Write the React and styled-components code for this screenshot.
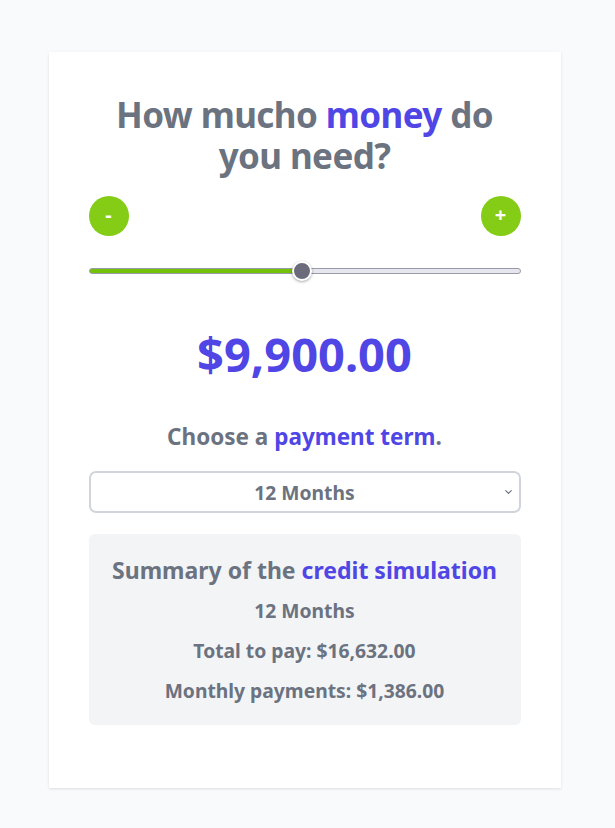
import React, { useState } from "react";
import styled, { createGlobalStyle } from "styled-components";
import { ChevronDown } from "lucide-react";

const GlobalStyle = createGlobalStyle`
  html, body { margin: 0; padding: 0; background: #f9fafb; }
  body { font-family: "Noto Sans", "Open Sans", sans-serif; }
  * { box-sizing: border-box; }
`;

const Page = styled.main`
  display: flex;
  justify-content: center;
  padding: 52px 6px 40px 0;
  min-height: 828px;
`;

const Card = styled.section`
  width: 512px;
  background: #ffffff;
  padding: 40px 40px 61px;
  box-shadow: 0 1px 3px rgba(0, 0, 0, 0.08), 0 1px 2px rgba(0, 0, 0, 0.04);
  display: flex;
  flex-direction: column;
`;

const Title = styled.h1`
  margin: 2px 0 0;
  font-size: 35px;
  line-height: 41px;
  font-weight: 700;
  letter-spacing: -0.6px;
  color: #6b7280;
  text-align: center;
  padding: 0 10px;
`;

const Accent = styled.span`
  color: #4f46e5;
`;

const Controls = styled.div`
  display: flex;
  justify-content: space-between;
  margin-top: 20px;
`;

const RoundButton = styled.button`
  width: 40px;
  height: 40px;
  border-radius: 50%;
  border: none;
  background: #84cc16;
  color: #ffffff;
  font-family: inherit;
  font-size: 20px;
  font-weight: 700;
  line-height: 1;
  display: flex;
  align-items: center;
  justify-content: center;
  padding: 0 0 2px;
  cursor: pointer;
`;

const Range = styled.input`
  -webkit-appearance: none;
  appearance: none;
  width: 100%;
  height: 6px;
  margin: 32px 0 0;
  border-radius: 4px;
  border: 1px solid #9a9aa8;
  outline: none;
  &::-webkit-slider-thumb {
    -webkit-appearance: none;
    appearance: none;
    width: 20px;
    height: 20px;
    border-radius: 50%;
    background: #6b6b7b;
    border: 2px solid #ffffff;
    box-shadow: 0 1px 3px rgba(0, 0, 0, 0.35);
    cursor: pointer;
  }
`;

const Amount = styled.div`
  margin-top: 56px;
  text-align: center;
  font-size: 47px;
  line-height: 48px;
  font-weight: 700;
  color: #4f46e5;
`;

const Subtitle = styled.h2`
  margin: 45px 0 0;
  text-align: center;
  font-size: 22.5px;
  line-height: 28px;
  font-weight: 700;
  color: #6b7280;
`;

const SelectWrap = styled.div`
  position: relative;
  margin-top: 20px;
`;

const Select = styled.select`
  -webkit-appearance: none;
  appearance: none;
  display: block;
  width: 100%;
  height: 42px;
  border: 2px solid #d1d5db;
  border-radius: 7px;
  background: #ffffff;
  color: #6b7280;
  font-family: inherit;
  font-size: 19.3px;
  font-weight: 700;
  text-align: center;
  text-align-last: center;
  padding: 0 24px;
  outline: none;
`;

const Chevron = styled(ChevronDown)`
  position: absolute;
  right: 7px;
  top: 50%;
  transform: translateY(-50%);
  width: 11px;
  height: 11px;
  color: #6b7280;
  pointer-events: none;
`;

const Summary = styled.div`
  margin-top: 21px;
  background: #f3f4f6;
  border-radius: 6px;
  padding: 22px 16px 20px;
  display: flex;
  flex-direction: column;
  align-items: center;
  gap: 12px;
`;

const SummaryTitle = styled.h3`
  margin: 0 0 1px;
  font-size: 23px;
  line-height: 28px;
  font-weight: 700;
  color: #6b7280;
`;

const SummaryLine = styled.p`
  margin: 0;
  font-size: 19.3px;
  line-height: 28px;
  font-weight: 700;
  color: #6b7280;
`;

const fmt = (n) =>
  "$" + n.toLocaleString("en-US", { minimumFractionDigits: 2, maximumFractionDigits: 2 });

export default function App() {
  const [amount, setAmount] = useState(9900);
  const [term, setTerm] = useState(12);
  const min = 0;
  const max = 20000;
  const pct = ((amount - min) / (max - min)) * 100;
  const rate = 1.68;
  const total = amount * rate;
  const monthly = total / term;

  return (
    <>
      <GlobalStyle />
      <Page>
        <Card>
          <Title>
            How mucho <Accent>money</Accent> do you need?
          </Title>
          <Controls>
            <RoundButton onClick={() => setAmount(Math.max(min, amount - 100))}>-</RoundButton>
            <RoundButton onClick={() => setAmount(Math.min(max, amount + 100))}>+</RoundButton>
          </Controls>
          <Range
            type="range"
            min={min}
            max={max}
            step={100}
            value={amount}
            onChange={(e) => setAmount(Number(e.target.value))}
            style={{
              background: `linear-gradient(to right, #74c10a 0%, #74c10a ${pct}%, #e6e6ee ${pct}%, #e6e6ee 100%)`,
            }}
          />
          <Amount>{fmt(amount)}</Amount>
          <Subtitle>
            Choose a <Accent>payment term</Accent>.
          </Subtitle>
          <SelectWrap>
            <Select value={term} onChange={(e) => setTerm(Number(e.target.value))}>
              <option value={3}>3 Months</option>
              <option value={6}>6 Months</option>
              <option value={12}>12 Months</option>
              <option value={24}>24 Months</option>
            </Select>
            <Chevron strokeWidth={2.5} />
          </SelectWrap>
          <Summary>
            <SummaryTitle>
              Summary of the <Accent>credit simulation</Accent>
            </SummaryTitle>
            <SummaryLine>{term} Months</SummaryLine>
            <SummaryLine>Total to pay: {fmt(total)}</SummaryLine>
            <SummaryLine>Monthly payments: {fmt(monthly)}</SummaryLine>
          </Summary>
        </Card>
      </Page>
    </>
  );
}
